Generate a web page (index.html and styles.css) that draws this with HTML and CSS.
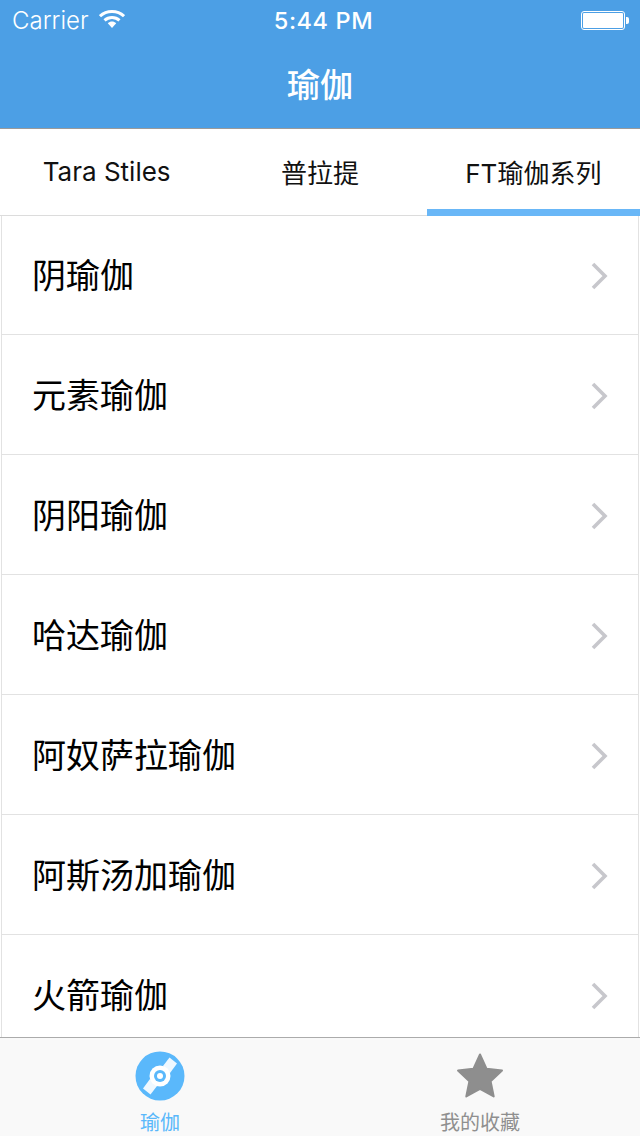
FILE: index.html
```html
<!DOCTYPE html>
<html lang="zh">
<head>
<meta charset="utf-8">
<title>瑜伽</title>
<link rel="stylesheet" href="styles.css">
</head>
<body>
<div class="app">
  <header class="header">
    <div class="status">
      <div class="status-left">
        <span class="carrier">Carrier</span>
        <svg class="wifi" width="26" height="20" viewBox="0 0 26 20"><path d="M1 7.2C7.600 1 18.400 1 25 7.200" fill="none" stroke="#fff" stroke-width="3"/><path d="M5.500 11.300C9.800 7.400 16.200 7.400 20.500 11.300" fill="none" stroke="#fff" stroke-width="3"/><path d="M8.800 14.200C11.300 12 14.700 12 17.200 14.200L13 19Z" fill="#fff"/></svg>
      </div>
      <span class="time">5:44 PM</span>
      <div class="battery"><div class="battery-body"><div class="battery-fill"></div></div><div class="battery-tip"></div></div>
    </div>
    <h1 class="title">瑜伽</h1>
  </header>
  <nav class="tabs">
    <div class="tab">Tara Stiles</div>
    <div class="tab">普拉提</div>
    <div class="tab tab-active">FT瑜伽系列</div>
  </nav>
  <ul class="list">
    <li class="row"><span>阴瑜伽</span><svg class="chev" width="18" height="28" viewBox="0 0 18 28"><path d="M3 2L15 14L3 26" fill="none" stroke="#c7c7cc" stroke-width="3.600"/></svg></li>
    <li class="row"><span>元素瑜伽</span><svg class="chev" width="18" height="28" viewBox="0 0 18 28"><path d="M3 2L15 14L3 26" fill="none" stroke="#c7c7cc" stroke-width="3.600"/></svg></li>
    <li class="row"><span>阴阳瑜伽</span><svg class="chev" width="18" height="28" viewBox="0 0 18 28"><path d="M3 2L15 14L3 26" fill="none" stroke="#c7c7cc" stroke-width="3.600"/></svg></li>
    <li class="row"><span>哈达瑜伽</span><svg class="chev" width="18" height="28" viewBox="0 0 18 28"><path d="M3 2L15 14L3 26" fill="none" stroke="#c7c7cc" stroke-width="3.600"/></svg></li>
    <li class="row"><span>阿奴萨拉瑜伽</span><svg class="chev" width="18" height="28" viewBox="0 0 18 28"><path d="M3 2L15 14L3 26" fill="none" stroke="#c7c7cc" stroke-width="3.600"/></svg></li>
    <li class="row"><span>阿斯汤加瑜伽</span><svg class="chev" width="18" height="28" viewBox="0 0 18 28"><path d="M3 2L15 14L3 26" fill="none" stroke="#c7c7cc" stroke-width="3.600"/></svg></li>
    <li class="row"><span>火箭瑜伽</span><svg class="chev" width="18" height="28" viewBox="0 0 18 28"><path d="M3 2L15 14L3 26" fill="none" stroke="#c7c7cc" stroke-width="3.600"/></svg></li>
  </ul>
  <footer class="tabbar">
    <div class="bar-item bar-active">
      <svg class="bar-icon" width="50" height="50" viewBox="0 0 50 50"><circle cx="25" cy="25" r="24.500" fill="#5ab8fb"/><path d="M28 15L34.500 6.500L42 12.500L35 22Z" fill="#fff" opacity=".9"/><path d="M22 35L15.500 43.500L8 37.500L15 28Z" fill="#fff" opacity=".9"/><circle cx="25" cy="25" r="10.500" fill="#fff"/><circle cx="25" cy="25" r="6" fill="#5ab8fb"/><circle cx="25" cy="25" r="3" fill="#fff"/></svg>
      <span class="bar-label">瑜伽</span>
    </div>
    <div class="bar-item">
      <svg class="bar-icon" width="50" height="50" viewBox="0 0 50 50"><path d="M25 3.500L31.600 17.800L47 19.600L35.600 30.200L38.700 45.500L25 37.800L11.300 45.500L14.400 30.200L3 19.600L18.400 17.800Z" fill="#8e8e8e" stroke="#8e8e8e" stroke-width="2" stroke-linejoin="round"/></svg>
      <span class="bar-label">我的收藏</span>
    </div>
  </footer>
</div>
</body>
</html>
```
FILE: styles.css
```css
* { box-sizing: border-box; }
html, body { margin: 0; padding: 0; }
body {
  background: #fff;
  font-family: Inter, "Noto Sans CJK SC", sans-serif;
  color: #000;
}
.app {
  width: 640px;
  height: 1136px;
  display: flex;
  flex-direction: column;
  overflow: hidden;
}
.header {
  flex: 0 0 129px;
  background: #4c9fe5;
  border-bottom: 1px solid #9a9a9a;
  color: #fff;
}
.status {
  height: 40px;
  padding: 0 11px 0 12px;
  display: grid;
  grid-template-columns: 1fr auto 1fr;
  align-items: center;
}
.status-left { display: flex; align-items: center; gap: 10px; }
.carrier { font-size: 24px; font-weight: 300; }
.wifi { display: block; margin-top: -3px; }
.time { font-size: 23.500px; font-weight: 500; letter-spacing: .6px; margin-left: 6px; }
.battery { justify-self: end; display: flex; align-items: center; }
.battery-body {
  width: 44px;
  height: 19px;
  border: 1px solid #fff;
  border-radius: 3px;
  padding: 1px;
}
.battery-fill { height: 100%; background: #fff; border-radius: 1px; }
.battery-tip {
  width: 3px;
  height: 7px;
  background: #fff;
  border-radius: 0 2px 2px 0;
  margin-left: 1px;
}
.title {
  margin: 0;
  height: 88px;
  display: flex;
  align-items: center;
  justify-content: center;
  font-size: 33px;
  font-weight: 500;
  padding-bottom: 3px;
}
.tabs {
  flex: 0 0 87px;
  display: grid;
  grid-template-columns: repeat(3, 1fr);
}
.tab {
  display: flex;
  align-items: center;
  justify-content: center;
  font-size: 26px;
  color: #111;
  padding-bottom: 2px;
  border-bottom: 1px solid #dcdcdc;
}
.tab-active {
  border-bottom-color: #69b7f7;
  box-shadow: inset 0 -6px 0 #69b7f7;
}
.list {
  flex: 1;
  min-height: 0;
  margin: 0 1px;
  padding: 0;
  list-style: none;
  overflow: hidden;
  border-left: 1px solid #e2e2e2;
  border-right: 1px solid #e2e2e2;
}
.row {
  height: 120px;
  padding: 3px 30px 0 30px;
  display: flex;
  align-items: center;
  justify-content: space-between;
  font-size: 34px;
  border-bottom: 1px solid #e2e2e2;
}
.row span { margin-top: -6px; }
.row:first-child { height: 119px; padding-top: 2px; }
.chev { display: block; flex: none; }
.tabbar {
  flex: 0 0 99px;
  display: grid;
  grid-template-columns: 1fr 1fr;
  background: #f9f9f9;
  border-top: 1px solid #ababab;
}
.bar-item {
  display: flex;
  flex-direction: column;
  align-items: center;
  color: #8f8f8f;
  padding-top: 13px;
}
.bar-active { color: #5ab8fb; }
.bar-icon { display: block; }
.bar-label { font-size: 20px; line-height: 24px; margin-top: 10px; }
```
